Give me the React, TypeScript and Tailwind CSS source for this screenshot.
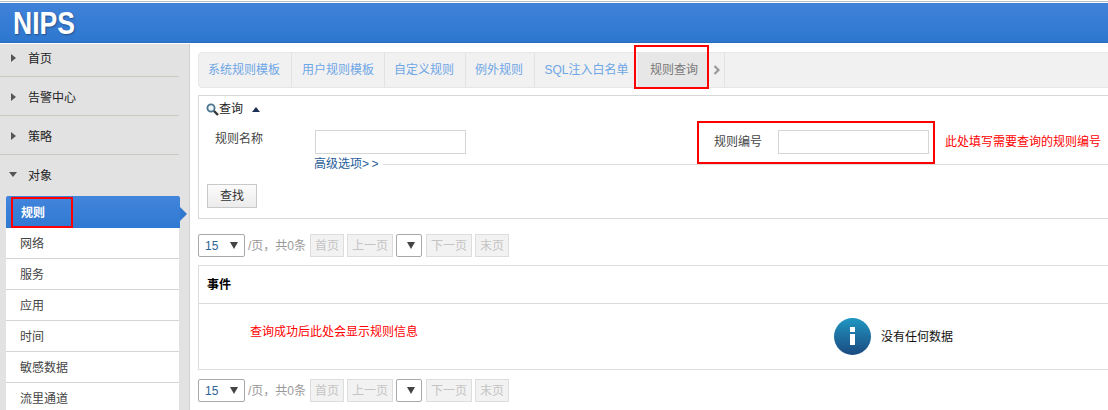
const topMenu = ['首页', '告警中心', '策略'];
const subMenu = ['网络', '服务', '应用', '时间', '敏感数据', '流里通道'];
const tabs = [
  { label: '系统规则模板', cls: 'w-[93px] pr-[2px]' },
  { label: '用户规则模板', cls: 'w-[93px]' },
  { label: '自定义规则', cls: 'w-[81px] pr-[2px]' },
  { label: '例外规则', cls: 'w-[69px] pr-[2px]' },
  { label: 'SQL注入白名单', cls: 'w-[104px]' },
];

function Pager() {
  const off = 'h-[23px] border border-[#dddddd] bg-[#f2f2f2] text-[#c4c4c4] flex items-center justify-center';
  return (
    <div className="flex items-center h-[23px] text-[12px]">
      <div className="w-[47px] h-[23px] border border-[#a9a9a9] rounded-[2px] flex items-center justify-between pl-[6px] pr-[6px] text-[#2a6496]">
        <span>15</span>
        <span className="w-0 h-0 border-x-[4px] border-x-transparent border-t-[7px] border-t-[#444444]" />
      </div>
      <span className="ml-[3px] w-[62px] text-[#999999] whitespace-nowrap">/页，共0条</span>
      <div className={`${off} w-[34px]`}>首页</div>
      <div className={`${off} w-[46px] ml-[3px]`}>上一页</div>
      <div className="w-[26px] h-[23px] ml-[3px] border border-[#a9a9a9] rounded-[2px] flex items-center justify-end pr-[6px]">
        <span className="w-0 h-0 border-x-[4px] border-x-transparent border-t-[7px] border-t-[#444444]" />
      </div>
      <div className={`${off} w-[46px] ml-[4px]`}>下一页</div>
      <div className={`${off} w-[34px] ml-[3px]`}>末页</div>
    </div>
  );
}

export default function App() {
  return (
    <div className="relative w-[1108px] h-[410px] overflow-hidden bg-white text-[12px] text-[#444444] font-['Liberation_Sans','Noto_Sans_CJK_SC',sans-serif]">
      {/* Header */}
      <div className="mt-[1px] h-[1px] bg-[#bdbdbd]" />
      <div className="mt-[1px] h-[40px] bg-gradient-to-b from-[#4082da] to-[#2d77cf] border-b border-b-[#2a6cbc] pl-[13px] flex items-center">
        <span className="origin-left scale-x-[0.83] text-[32px] font-bold leading-none text-white [text-shadow:1px_1px_2px_rgba(0,0,0,0.35)]">NIPS</span>
      </div>

      <div className="flex mt-[1px] h-[366px]">
        {/* Sidebar */}
        <aside className="w-[190px] shrink-0 bg-[#e2e2e2] border-r border-[#d0d0d0]">
          {topMenu.map((m) => (
            <div key={m} className="w-[179px] h-[39px] pt-[4px] border-b border-[#cbc8c2] flex items-center pl-[11px] text-[#222222] first:h-[33px] first:pt-0 first:pb-[3px]">
              <span className="w-0 h-0 border-y-[4px] border-y-transparent border-l-[5px] border-l-[#555555] mr-[12px] -mt-[2px]" />
              {m}
            </div>
          ))}
          <div className="w-[179px] h-[41px] flex items-center pl-[9px] text-[#222222]">
            <span className="w-0 h-0 border-x-[4px] border-x-transparent border-t-[5px] border-t-[#555555] mr-[11px] -mt-[3px]" />
            对象
          </div>
          <div className="relative ml-[6px] w-[174px] h-[32px] pt-[2px] bg-gradient-to-b from-[#4285dc] to-[#2f79d2] rounded-t-[2px] flex items-center pl-[15px] font-bold text-white">
            规则
            <span className="absolute left-full top-[11px] w-0 h-0 border-y-[7px] border-y-transparent border-l-[7px] border-l-[#3077d0]" />
          </div>
          {subMenu.map((m) => (
            <div key={m} className="ml-[6px] w-[173px] h-[31px] pt-[2px] bg-white border-b border-[#d4d4d4] flex items-center pl-[14px] text-[#444444]">
              {m}
            </div>
          ))}
        </aside>

        {/* Main */}
        <main className="flex-1 pl-[8px] pt-[8px] -mr-[2px]">
          <div className="h-[36px] flex border border-[#e6e6e6] rounded-l-[4px] bg-[#f1f1f1]">
            {tabs.map((t) => (
              <div key={t.label} className={`${t.cls} border-r border-[#e2e2e2] flex items-center justify-center text-[#6ea6e6] whitespace-nowrap`}>
                {t.label}
              </div>
            ))}
            <div className="w-[69px] pl-[1px] bg-[#e7e7e7] flex items-center justify-center text-[#777777]">规则查询</div>
            <div className="w-[17px] border-r border-[#e2e2e2] flex items-center justify-center">
              <svg width="7" height="10" viewBox="0 0 7 10" fill="none" stroke="#999999" strokeWidth="2.2">
                <polyline points="1.5,1 5.5,5 1.5,9" />
              </svg>
            </div>
          </div>

          {/* Query panel */}
          <section className="mt-[7px] h-[124px] border border-[#d8d8d8] pt-[5px]">
            <div className="flex items-center h-[16px] pl-[7px] text-[#222222]">
              <svg width="13" height="13" viewBox="0 0 13 13" fill="none">
                <circle cx="5" cy="5" r="3.6" stroke="#4a7590" strokeWidth="1.8" fill="#eef5f9" />
                <line x1="8" y1="8" x2="12" y2="12" stroke="#333333" strokeWidth="2.4" />
              </svg>
              <span>查询</span>
              <span className="ml-[9px] w-0 h-0 border-x-[4px] border-x-transparent border-b-[5px] border-b-[#1c2f55]" />
            </div>
            <div className="flex mt-[13px] h-[24px]">
              <span className="ml-[16px] w-[100px]">规则名称</span>
              <div className="w-[151px] h-[24px] border border-[#d6d6d6]" />
              <span className="ml-[248px] w-[64px] leading-[24px]">规则编号</span>
              <div className="w-[151px] h-[24px] border border-[#d6d6d6]" />
              <span className="ml-[16px] leading-[24px] text-[#ff0000] whitespace-nowrap">此处填写需要查询的规则编号</span>
            </div>
            <div className="flex items-center h-[20px] pl-[115px]">
              <span className="text-[#1f5c99] whitespace-nowrap">高级选项<span className="tracking-[2.5px]">&gt;&gt;</span></span>
              <div className="flex-1 ml-[2px] border-t border-[#dddddd]" />
            </div>
            <button className="ml-[8px] mt-[10px] w-[50px] h-[24px] border border-[#c9c9c9] bg-gradient-to-b from-[#fbfbfb] to-[#ececec] text-[#333333]">查找</button>
          </section>

          <div className="mt-[15px]"><Pager /></div>

          {/* Result table */}
          <section className="mt-[8px] h-[105px] border border-[#dcdcdc]">
            <div className="h-[38px] border-b border-[#dcdcdc] flex items-center pl-[8px] font-bold text-black">事件</div>
            <div className="h-[65px] flex items-center">
              <span className="ml-[51px] -mt-[9px] w-[584px] text-[#ff0000]">查询成功后此处会显示规则信息</span>
              <span className="w-[37px] h-[37px] rounded-full bg-gradient-to-b from-[#2097c2] to-[#1a4a80] flex flex-col items-center pt-[9px] gap-[2px]">
                <span className="w-[5px] h-[5px] bg-white" />
                <span className="w-[5px] h-[11px] bg-white" />
              </span>
              <span className="ml-[10px] text-[#111111]">没有任何数据</span>
            </div>
          </section>

          <div className="mt-[9px]"><Pager /></div>
        </main>
      </div>

      {/* Red annotation boxes */}
      <div className="absolute left-[634px] top-[45px] w-[75px] h-[44px] border-[2px] border-[#ff0000]" />
      <div className="absolute left-[697px] top-[121px] w-[238px] h-[43px] border-[2px] border-[#ff0000]" />
      <div className="absolute left-[11px] top-[197px] w-[62px] h-[31px] border-[2px] border-[#ff0000]" />
    </div>
  );
}
